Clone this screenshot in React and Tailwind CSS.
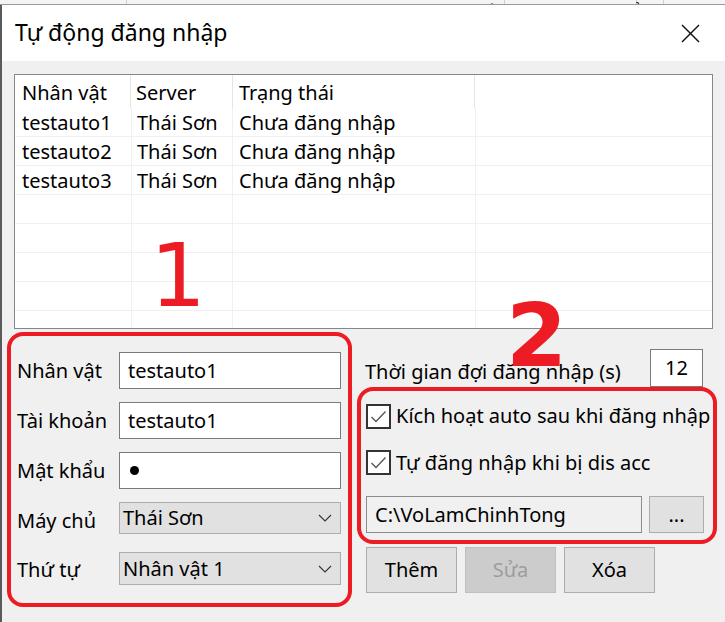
import React from "react";

const RED = "border-[#ed1c24]";

function TopStrip() {
  return (
    <div className="h-[5px] flex bg-[#f4f4f4] border-b border-[#9a9a9a] overflow-hidden text-[20px] text-black">
      <div className="w-[127px] border-r border-[#d0d0d0]" />
      <div className="w-[378px] border-r border-[#d0d0d0] flex items-end">
        <span className="ml-[213px] -mb-[22px] leading-[26px]">Đ ữ</span>
        <span className="ml-[100px] -mb-[22px] leading-[26px]">L Cấ</span>
      </div>
      <div className="w-[132px] border-r border-[#d0d0d0] flex items-end">
        <span className="ml-[106px] -mb-[22px] leading-[26px]">Đ Kiể</span>
      </div>
      <div className="w-[27px] border-r border-[#d0d0d0]" />
      <div className="flex-1" />
    </div>
  );
}

function ListView() {
  const rows = [
    ["testauto1", "Thái Sơn", "Chưa đăng nhập"],
    ["testauto2", "Thái Sơn", "Chưa đăng nhập"],
    ["testauto3", "Thái Sơn", "Chưa đăng nhập"],
    ["", "", ""],
    ["", "", ""],
    ["", "", ""],
    ["", "", ""],
    ["", "", ""],
  ];
  return (
    <div className="w-[699px] h-[255px] border border-[#828790] bg-white overflow-hidden">
      <div className="flex h-[33px] items-center">
        <div className="w-[116px] h-full pl-[7px] pt-[2px] border-r border-[#e5e5e5] flex items-center">Nhân vật</div>
        <div className="w-[102px] h-full pl-[5px] pt-[2px] border-r border-[#e5e5e5] flex items-center">Server</div>
        <div className="w-[242px] h-full pl-[6px] pt-[2px] border-r border-[#e5e5e5] flex items-center">Trạng thái</div>
        <div className="flex-1" />
      </div>
      {rows.map((r, i) => (
        <div key={i} className="flex h-[29px] border-b border-[#f0f0f0]">
          <div className="w-[117px] pl-[7px] pt-[1px] border-r border-[#f0f0f0] flex items-center whitespace-nowrap">{r[0]}</div>
          <div className="w-[101px] pl-[5px] pt-[1px] border-r border-[#f0f0f0] flex items-center whitespace-nowrap">{r[1]}</div>
          <div className="w-[243px] pl-[6px] pt-[1px] border-r border-[#f0f0f0] flex items-center whitespace-nowrap">{r[2]}</div>
          <div className="flex-1" />
        </div>
      ))}
    </div>
  );
}

function Chevron() {
  return (
    <svg width="14" height="8" viewBox="0 0 14 8" className="mr-[8px]">
      <polyline points="1,1 7,7 13,1" fill="none" stroke="#333" strokeWidth="1.1" />
    </svg>
  );
}

function TextBox({ children, h = "h-[37px]" }) {
  return (
    <div className={`w-[222px] ${h} border border-[#7a7a7a] bg-white flex items-center pl-[8px] whitespace-nowrap`}>
      {children}
    </div>
  );
}

function Combo({ children, h }) {
  return (
    <div className={`w-[222px] ${h} border border-[#adadad] bg-[#e1e1e1] flex items-center justify-between pl-[3px] whitespace-nowrap`}>
      <span>{children}</span>
      <Chevron />
    </div>
  );
}

function CheckBox() {
  return (
    <div className="w-[25px] h-[25px] border-2 border-[#333] bg-white flex items-center justify-center shrink-0">
      <svg width="19" height="19" viewBox="0 0 19 19">
        <polyline points="2.5,10 7,14.5 16.5,4.5" fill="none" stroke="#555" strokeWidth="1.3" />
      </svg>
    </div>
  );
}

export default function App() {
  return (
    <div className="w-[725px] h-[622px] overflow-hidden relative bg-[#f0f0f0] flex flex-col text-[20px] text-black [font-family:'Noto_Sans',sans-serif]">
      <TopStrip />
      <div className="flex-1 flex flex-col border-l-2 border-[#5a5a5a]">
        <div className="h-[56px] bg-white flex items-center justify-between pl-[13px] pr-[25px]">
          <span className="text-[23px] leading-none pb-[2px]">Tự động đăng nhập</span>
          <svg width="19" height="19" viewBox="0 0 19 19">
            <line x1="1" y1="1" x2="18" y2="18" stroke="#111" strokeWidth="1.4" />
            <line x1="18" y1="1" x2="1" y2="18" stroke="#111" strokeWidth="1.4" />
          </svg>
        </div>
        <div className="flex-1 relative pl-[12px] pt-[13px]">
          <ListView />
          <div className="flex mt-[3px] -ml-[7px]">
            {/* Left form box */}
            <div className={`w-[345px] h-[275px] border-4 ${RED} rounded-[16px] pl-[6px] pt-[16px]`}>
              <div className="flex items-center h-[37px]">
                <span className="w-[102px]">Nhân vật</span>
                <TextBox>testauto1</TextBox>
              </div>
              <div className="flex items-center h-[37px] mt-[13px]">
                <span className="w-[102px]">Tài khoản</span>
                <TextBox>testauto1</TextBox>
              </div>
              <div className="flex items-center h-[37px] mt-[13px]">
                <span className="w-[102px]">Mật khẩu</span>
                <TextBox>
                  <span className="w-[9px] h-[9px] rounded-full bg-black ml-[2px]" />
                </TextBox>
              </div>
              <div className="flex items-center h-[32px] mt-[13px]">
                <span className="w-[102px] pt-[6px]">Máy chủ</span>
                <Combo h="h-[32px]">Thái Sơn</Combo>
              </div>
              <div className="flex items-center h-[33px] mt-[18px]">
                <span className="w-[102px] pt-[3px]">Thứ tự</span>
                <Combo h="h-[33px]">Nhân vật 1</Combo>
              </div>
            </div>
            {/* Right column */}
            <div className="w-[360px] ml-[5px] flex flex-col">
              <div className="flex items-center h-[38px] mt-[17px] pl-[8px] pr-[14px]">
                <span className="pt-[7px] whitespace-nowrap">Thời gian đợi đăng nhập (s)</span>
                <div className="ml-auto w-[53px] h-[38px] border border-[#7a7a7a] bg-white flex items-center justify-center">12</div>
              </div>
              <div className={`w-[360px] h-[157px] border-4 ${RED} rounded-[16px] pl-[5px] pt-[12px] flex flex-col`}>
                <div className="flex items-center h-[26px] whitespace-nowrap">
                  <CheckBox />
                  <span className="ml-[5px]">Kích hoạt auto sau khi đăng nhập</span>
                </div>
                <div className="flex items-center h-[25px] mt-[21px] whitespace-nowrap">
                  <CheckBox />
                  <span className="ml-[5px]">Tự đăng nhập khi bị dis acc</span>
                </div>
                <div className="flex mt-[21px]">
                  <div className="w-[276px] h-[37px] border border-[#8c8c8c] bg-[#f0f0f0] flex items-center pl-[8px] whitespace-nowrap">C:\VoLamChinhTong</div>
                  <div className="w-[55px] h-[37px] ml-[7px] border border-[#adadad] bg-[#e1e1e1] flex items-center justify-center">...</div>
                </div>
              </div>
              <div className="flex gap-[8px] mt-[3px] pl-[9px]">
                <div className="w-[91px] h-[46px] border border-[#adadad] bg-[#e1e1e1] flex items-center justify-center">Thêm</div>
                <div className="w-[91px] h-[46px] border border-[#bfbfbf] bg-[#cccccc] text-[#9d9d9d] flex items-center justify-center">Sửa</div>
                <div className="w-[91px] h-[46px] border border-[#adadad] bg-[#e1e1e1] flex items-center justify-center">Xóa</div>
              </div>
            </div>
          </div>
          <span className="absolute left-[148px] top-[171px] text-[88px] leading-none text-[#ed1c24] [font-family:'DejaVu_Sans',sans-serif]">1</span>
          <span className="absolute left-[504px] top-[231px] text-[88px] leading-none text-[#ed1c24] font-bold [font-family:'DejaVu_Sans',sans-serif]">2</span>
        </div>
      </div>
    </div>
  );
}
